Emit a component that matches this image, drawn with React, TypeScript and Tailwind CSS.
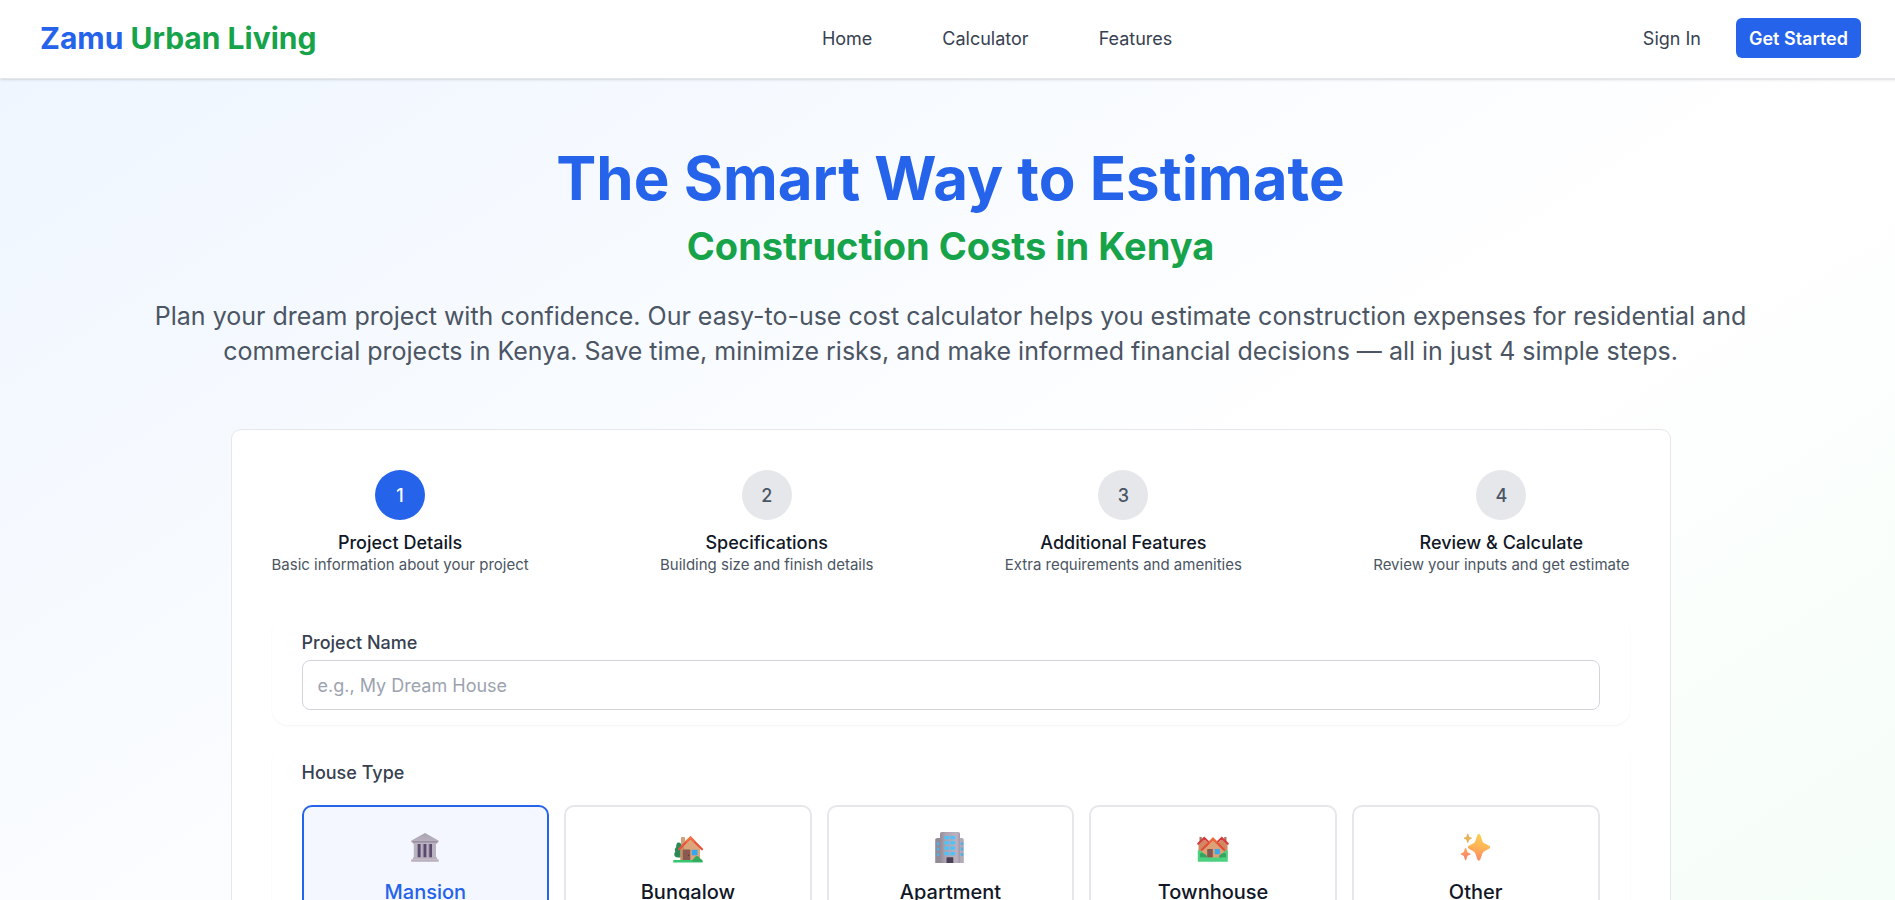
import { ReactNode, useState } from "react";
import clsx from "clsx";

type Step = {
  title: string;
  description: string;
};

type HouseType = {
  name: string;
  icon: ReactNode;
};

const navLinks = ["Home", "Calculator", "Features"];

const steps: Step[] = [
  { title: "Project Details", description: "Basic information about your project" },
  { title: "Specifications", description: "Building size and finish details" },
  { title: "Additional Features", description: "Extra requirements and amenities" },
  { title: "Review & Calculate", description: "Review your inputs and get estimate" },
];

function MansionIcon() {
  return (
    <svg viewBox="0 0 32 32" className="size-8" aria-hidden="true">
      <defs>
        <linearGradient id="stone" x1="0" x2="0" y1="0" y2="1">
          <stop offset="0" stopColor="#a9a2b0" />
          <stop offset="1" stopColor="#bdb5c3" />
        </linearGradient>
      </defs>
      <path d="M5.5 13h21v14h-21z" fill="#5c4a6e" />
      <path d="M4.8 13h4v14h-4zM11.6 13h2.8v14h-2.8zM17.4 13h2.8v14h-2.8zM23 13h4v14h-4z" fill="#b9b2c0" />
      <path d="M8 13h.8v14H8zM13.7 13h.7v14h-.7zM19.5 13h.7v14h-.7z" fill="#938a9f" />
      <path d="M16 2 29.4 9.4c.4.3.4.6.4 1.2L27.6 13H4.4L2 10.6c0-.6 0-.9.4-1.2z" fill="url(#stone)" />
      <path d="M3 10.3h26l-1.4 1.2H4.4z" fill="#8f8799" />
      <path d="M4 26.3h24v2h1.6v2.5H2.2v-2.5H4z" fill="#b8b0bd" />
      <path d="M4 28h24v.7H4z" fill="#c9c2cd" />
    </svg>
  );
}

function BungalowIcon() {
  return (
    <svg viewBox="0 0 32 32" className="size-8" aria-hidden="true">
      <path d="M6.5 11.5c2 0 3 1.5 3 3v12H6c-2.5 0-4-1.5-3.7-3.6.2-1.2.9-1.8.9-2.6-1.1-2 .2-3.3.9-4.1 0-2.6.8-4.7 2.4-4.7z" fill="#2b8a5a" />
      <path d="M9 6.8c0-.5.4-.8.9-.8h2.2c.5 0 .9.3.9.8V14H9z" fill="#cfa27c" />
      <path d="M18.5 7.5 28 17.5v13H8.5v-13z" fill="#dda67a" />
      <path d="M8.5 17.5 12 14v16.5H8.5z" fill="#c98f64" />
      <path d="M7 18.3 18.5 6.7 30 18.3" fill="none" stroke="#e8503a" strokeWidth="2.2" strokeLinecap="round" />
      <path d="m14 10.5 4.5-4.2 4 3.8" fill="none" stroke="#f27343" strokeWidth="1.8" strokeLinecap="round" />
      <rect x="10.8" y="18.5" width="7.5" height="11" rx=".5" fill="#8a5a52" />
      <circle cx="16.6" cy="24.3" r=".6" fill="#4f2f36" />
      <rect x="19.8" y="18.8" width="5.7" height="5.5" fill="#35a7ee" />
      <path d="M1.2 30c0-.6.4-.9 1-.9h27.6c.6 0 1 .3 1 .9v1.5H1.2z" fill="#37c670" />
      <path d="M20.5 29.7c-.2-1.3.9-2.2 1.8-2.2.2-1.4 1.3-2.4 2.7-2.4s2.6 1 2.8 2.4c1.4.2 2.4 1.1 2.2 2.2-.1.7-.7 1.1-1.5 1.1h-6.6c-.8 0-1.3-.4-1.4-1.1z" fill="#36a95e" />
    </svg>
  );
}

function ApartmentIcon() {
  return (
    <svg viewBox="0 0 32 32" className="size-8" aria-hidden="true">
      <defs>
        <linearGradient id="tower" x1="0" x2="1" y1="0" y2="0">
          <stop offset="0" stopColor="#948a99" />
          <stop offset=".25" stopColor="#aaa2af" />
          <stop offset=".85" stopColor="#bab2bf" />
          <stop offset="1" stopColor="#a197a9" />
        </linearGradient>
      </defs>
      <path d="M1.2 9c0-1.2.8-2 2-2H8v25H1.2z" fill="#948b98" />
      <path d="M24 7h3.8c1.2 0 2 .8 2 2v23H24z" fill="#b3aab8" />
      <path d="M6 3c0-1.2.8-2 2-2h16c1.2 0 2 .8 2 2v29H6z" fill="url(#tower)" />
      <path d="M10.5 5h4.6v3.2h-4.6zM16.5 5h4.6v3.2h-4.6zM10.5 10.3h4.6v3.2h-4.6zM16.5 10.3h4.6v3.2h-4.6zM10.5 15.6h4.6v3.2h-4.6zM16.5 15.6h4.6v3.2h-4.6zM10.5 21h4.6v3.2h-4.6zM16.5 21h4.6v3.2h-4.6z" fill="#4cc4fb" />
      <path d="M3 11.2h2.2v3H3zM3 16.6h2.2v3H3zM3 22h2.2v3H3zM26.8 11.2H29v3h-2.2zM26.8 16.6H29v3h-2.2zM26.8 22H29v3h-2.2z" fill="#43b4ef" />
      <path d="M12.5 27c0-.5.4-.8.8-.8h5.2c.5 0 .8.3.8.8v5h-6.8z" fill="#4b3f56" />
    </svg>
  );
}

function TownhouseIcon() {
  return (
    <svg viewBox="0 0 32 32" className="size-8" aria-hidden="true">
      <path d="M2.5 6h2.3v5H2.5zM27.2 6h2.3v5h-2.3z" fill="#a8775c" />
      <path d="M6.5 7.5 14 15v12H1.5V12.5zM25.5 7.5 18 15v12h12.5V12.5z" fill="#d1875f" />
      <path d="m1.2 12.8 6-6L12 11.5M30.8 12.8l-6-6L20 11.5" fill="none" stroke="#d63a3f" strokeWidth="2" strokeLinecap="round" />
      <path d="M16 8 27 18.5V28H5v-9.5z" fill="#dda178" />
      <path d="M5 18.7 16 7.7l11 11" fill="none" stroke="#e44a36" strokeWidth="2.1" strokeLinecap="round" />
      <path d="m12.5 11 3.5-3.5 3.5 3.5" fill="none" stroke="#ef6b3d" strokeWidth="1.7" strokeLinecap="round" />
      <rect x="10.2" y="18" width="5.6" height="8.8" rx=".5" fill="#85594e" />
      <rect x="17.8" y="18" width="5" height="5.2" fill="#3aa9ee" />
      <path d="M.8 19.5c1.8-.9 3.6.1 4 1.7 1.6.5 2.3 1.8 3.3 3.2.5.8 1 1.8 2 2.1h12c1-.3 1.5-1.3 2-2.1 1-1.4 1.7-2.7 3.3-3.2.4-1.6 1.6-2.6 3.4-1.7v11.2H.8z" fill="#4bd180" />
      <path d="M3 26.3v-2.8c0-1.7 2.5-2.3 4-.8 1.5.3 2.3 1.3 2.8 2.3.4.8 0 1.5-.8 1.5zM29 26.3v-2.8c0-1.7-2.5-2.3-4-.8-1.5.3-2.3 1.3-2.8 2.3-.4.8 0 1.5.8 1.5z" fill="#35a561" />
    </svg>
  );
}

function SparklesIcon() {
  return (
    <svg viewBox="0 0 32 32" className="size-8" aria-hidden="true">
      <defs>
        <linearGradient id="spark" x1="0.5" x2="0.35" y1="0" y2="1">
          <stop offset="0" stopColor="#fbcf52" />
          <stop offset=".5" stopColor="#fdb356" />
          <stop offset="1" stopColor="#fb8568" />
        </linearGradient>
        <linearGradient id="sparkLow" x1="0" x2="0" y1="0" y2="1">
          <stop offset="0" stopColor="#fda861" />
          <stop offset="1" stopColor="#f77c6c" />
        </linearGradient>
      </defs>
      <path d="M17.4 4c.5-1.5 2.4-1.5 2.9 0l2.2 6.3c.4 1 1.2 1.9 2.3 2.3l4.4 2.2c1.2.6 1.2 2.3 0 2.9l-4.4 2.2c-1.1.5-1.9 1.3-2.3 2.4l-2.2 6.2c-.5 1.5-2.4 1.5-2.9 0l-2.2-6.2c-.4-1.1-1.2-1.9-2.3-2.4l-4.2-2.2c-1.2-.6-1.2-2.3 0-2.9l4.2-2.2c1.1-.4 1.9-1.3 2.3-2.3z" fill="url(#spark)" />
      <path d="M7.2 3.3c.2-.6 1-.6 1.2 0l.8 2.1c.1.3.3.5.6.6l1.7.8c.5.2.5.8 0 1l-1.7.8c-.3.1-.5.3-.6.6l-.8 2.3c-.2.5-1 .5-1.2 0l-.8-2.3c-.1-.3-.3-.5-.6-.6l-1.7-.8c-.5-.2-.5-.8 0-1L5.8 6c.3-.1.5-.3.6-.6z" fill="#e8b35c" />
      <path d="M4.9 17.6c.2-.7 1.2-.7 1.4 0l1 2.9c.1.4.4.7.8.9l2 1c.6.3.6 1 0 1.3l-2 .9c-.4.2-.7.5-.8.9l-1 3.1c-.2.7-1.2.7-1.4 0l-1-3.1c-.1-.4-.4-.7-.8-.9l-2-.9c-.6-.3-.6-1 0-1.3l2-1c.4-.2.7-.5.8-.9z" fill="url(#sparkLow)" />
    </svg>
  );
}

const houseTypes: HouseType[] = [
  { name: "Mansion", icon: <MansionIcon /> },
  { name: "Bungalow", icon: <BungalowIcon /> },
  { name: "Apartment", icon: <ApartmentIcon /> },
  { name: "Townhouse", icon: <TownhouseIcon /> },
  { name: "Other", icon: <SparklesIcon /> },
];

function Navbar() {
  return (
    <header className="relative z-10 flex items-center justify-between border-b border-[#e5e7eb] bg-white px-10 pt-[18px] pb-5 shadow-sm">
      <a href="#" className="text-3xl leading-10 font-bold text-[#2563eb]">
        Zamu <span className="text-[#16a34a]">Urban Living</span>
      </a>
      <nav className="flex gap-[70px] pl-[35px] text-[18px] text-[#374151]">
        {navLinks.map((link) => (
          <a key={link} href="#" className="hover:text-[#2563eb]">
            {link}
          </a>
        ))}
      </nav>
      <div className="flex items-center gap-[35px] text-[18px]">
        <a href="#" className="text-[#374151] hover:text-[#2563eb]">
          Sign In
        </a>
        <button type="button" className="h-10 rounded-md bg-[#2563eb] px-[13px] font-semibold text-white hover:bg-[#1d4ed8]">
          Get Started
        </button>
      </div>
    </header>
  );
}

function StepIndicator({ current }: { current: number }) {
  return (
    <ol className="flex justify-between">
      {steps.map((step, index) => (
        <li key={step.title} className="flex flex-col items-center text-center">
          <span
            className={clsx(
              "flex size-[50px] items-center justify-center rounded-full text-[18px] font-medium",
              index === current ? "bg-[#2563eb] text-white" : "bg-[#e5e7eb] text-[#4b5563]"
            )}
          >
            {index + 1}
          </span>
          <span className="mt-3 text-[18px] leading-[22px] font-medium text-[#111827]">{step.title}</span>
          <span className="text-[15px] leading-[22px] text-[#4b5563]">{step.description}</span>
        </li>
      ))}
    </ol>
  );
}

export default function App() {
  const [houseType, setHouseType] = useState("Mansion");
  const [projectName, setProjectName] = useState("");

  return (
    <div className="min-h-screen overflow-x-clip bg-white font-['Inter',sans-serif]">
      <div className="-mr-1.5">
        <Navbar />
        <main className="min-h-[1250px] bg-linear-to-br/srgb from-[#eff6ff] via-white to-[#f0fdf4] px-10 pt-[62px] pb-20">
          <div className="text-center">
            <h1 className="text-6xl leading-[75px] font-bold text-[#2563eb]">The Smart Way to Estimate</h1>
            <h2 className="mt-[5px] text-[38px] leading-[50px] font-bold text-[#16a34a]">Construction Costs in Kenya</h2>
            <p className="mx-auto mt-7 max-w-[1640px] text-[25px] leading-[35px] text-[#4b5563]">
              Plan your dream project with confidence. Our easy-to-use cost calculator helps you estimate construction
              expenses for residential and commercial projects in Kenya. Save time, minimize risks, and make informed
              financial decisions — all in just 4 simple steps.
            </p>
          </div>

          <div className="mx-auto mt-[60px] max-w-[1440px] rounded-[10px] border border-[#e5e7eb] bg-white p-10">
            <StepIndicator current={0} />

            <form className="mt-[39px] space-y-5" onSubmit={(e) => e.preventDefault()}>
              <section className="rounded-2xl px-[30px] py-[15px] shadow-xs">
                <label htmlFor="project-name" className="block text-[18px] leading-[25px] font-medium text-[#374151]">
                  Project Name
                </label>
                <input
                  id="project-name"
                  type="text"
                  value={projectName}
                  onChange={(e) => setProjectName(e.target.value)}
                  placeholder="e.g., My Dream House"
                  className="mt-[5px] h-[50px] w-full rounded-lg border border-[#d1d5db] bg-white px-[15px] text-[18px] placeholder:text-[#9ca3af]"
                />
              </section>

              <section className="rounded-2xl px-[30px] py-[15px] shadow-xs">
                <h3 id="house-type" className="text-[18px] leading-[25px] font-medium text-[#374151]">
                  House Type
                </h3>
                <div role="group" aria-labelledby="house-type" className="mt-5 grid grid-cols-5 gap-[15px]">
                  {houseTypes.map(({ name, icon }) => (
                    <button
                      key={name}
                      type="button"
                      aria-pressed={houseType === name}
                      onClick={() => setHouseType(name)}
                      className={clsx(
                        "flex flex-col items-center rounded-[10px] border-2 px-5 py-6 text-[20px] leading-[30px] font-medium",
                        houseType === name
                          ? "border-[#2563eb] bg-[#f4f7ff] text-[#2563eb]"
                          : "border-[#e5e7eb] bg-white text-[#111827]"
                      )}
                    >
                      {icon}
                      <span className="mt-3.5">{name}</span>
                    </button>
                  ))}
                </div>
              </section>
            </form>
          </div>
        </main>
      </div>
    </div>
  );
}
